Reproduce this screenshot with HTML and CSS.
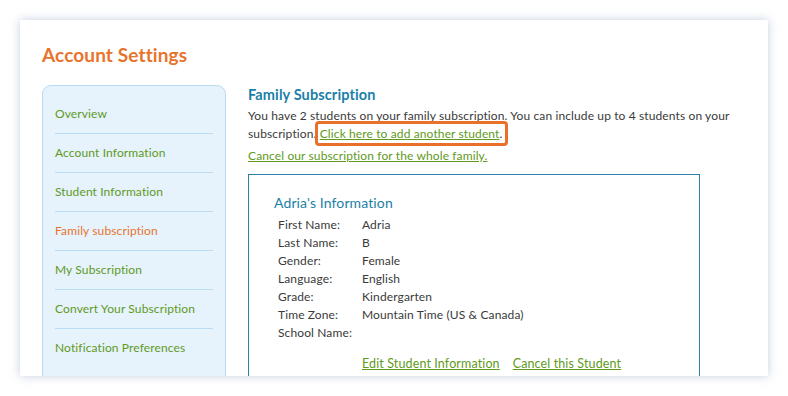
FILE: index.html
```html
<!DOCTYPE html>
<html lang="en">
<head>
  <meta charset="UTF-8" />
  <title>Account Settings</title>
  <link rel="stylesheet" href="styles.css">
</head>
<body>
  <div class="card">
    <h1>Account Settings</h1>
    <div class="layout">
      <ul class="sidebar">
        <li><a href="#">Overview</a></li>
        <li><a href="#">Account Information</a></li>
        <li><a href="#">Student Information</a></li>
        <li class="active"><a href="#">Family subscription</a></li>
        <li><a href="#">My Subscription</a></li>
        <li><a href="#">Convert Your Subscription</a></li>
        <li><a href="#">Notification Preferences</a></li>
      </ul>

      <div class="main">
        <h2>Family Subscription</h2>
        <p>You have 2 students on your family subscription. You can include up to 4 students on your
          subscription. <span class="highlight"><a href="#">Click here to add another student</a>.</span></p>
        <p class="cancel"><a href="#">Cancel our subscription for the whole family.</a></p>

        <div class="student">
          <h3>Adria's Information</h3>
          <table>
            <tr><td>First Name:</td><td>Adria</td></tr>
            <tr><td>Last Name:</td><td>B</td></tr>
            <tr><td>Gender:</td><td>Female</td></tr>
            <tr><td>Language:</td><td>English</td></tr>
            <tr><td>Grade:</td><td>Kindergarten</td></tr>
            <tr><td>Time Zone:</td><td>Mountain Time (US &amp; Canada)</td></tr>
            <tr><td>School Name:</td><td></td></tr>
          </table>
          <div class="actions">
            <a href="#">Edit Student Information</a>
            <a href="#">Cancel this Student</a>
          </div>
        </div>
      </div>
    </div>
  </div>
</body>
</html>
```

FILE: styles.css
```css
body {
  margin: 0;
  padding: 20px;
  background: #fff;
  font-family: Lato, "Open Sans", sans-serif;
  font-size: 12px;
  letter-spacing: 0.12px;
  color: #3a3a3a;
}
a {
  color: #5f9a1c;
}
.card {
  width: 748px;
  height: 356px;
  box-sizing: border-box;
  padding: 24px 22px 0;
  background: #fff;
  box-shadow: 0 0 9px rgba(150, 165, 195, 0.55);
  overflow: hidden;
}
h1 {
  margin: 0 0 19px;
  font-size: 19px;
  line-height: 22px;
  color: #e8742c;
}
.layout {
  display: flex;
  gap: 22px;
}
.sidebar {
  list-style: none;
  margin: 0;
  padding: 9px 12px;
  width: 184px;
  box-sizing: border-box;
  background: #e6f2fc;
  border: 1px solid #b9dbf4;
  border-radius: 9px;
  flex-shrink: 0;
}
.sidebar li {
  height: 38px;
  line-height: 38px;
  border-bottom: 1px solid #b9dbf4;
}
.sidebar li:last-child {
  border-bottom: none;
}
.sidebar a {
  text-decoration: none;
  font-size: 12px;
}
.sidebar .active a {
  color: #e8742c;
}
.main {
  flex: 1;
  padding-top: 1px;
}
h2 {
  margin: 0 0 3px;
  font-size: 14.5px;
  line-height: 18px;
  color: #1a7fa8;
}
p {
  margin: 0;
  line-height: 18px;
}
.highlight {
  position: relative;
}
.highlight::after {
  content: "";
  position: absolute;
  left: -5px;
  right: -6px;
  top: -5px;
  bottom: -5px;
  border: 3px solid #e8702a;
  border-radius: 4px;
}
.cancel {
  margin-top: 4px;
}
.student {
  margin-top: 9px;
  width: 452px;
  box-sizing: border-box;
  border: 1px solid #2a80a8;
  padding: 18px 25px 20px;
}
h3 {
  margin: 0 0 3px;
  font-size: 14px;
  font-weight: normal;
  line-height: 20px;
  color: #1a7fa8;
}
table {
  border-collapse: collapse;
  margin-left: 4px;
}
td {
  padding: 0;
  height: 18px;
  line-height: 18px;
}
td:first-child {
  width: 84px;
}
.actions {
  margin-top: 13px;
  padding-left: 88px;
  display: flex;
  gap: 13px;
  font-size: 12.5px;
  line-height: 18px;
}
```
